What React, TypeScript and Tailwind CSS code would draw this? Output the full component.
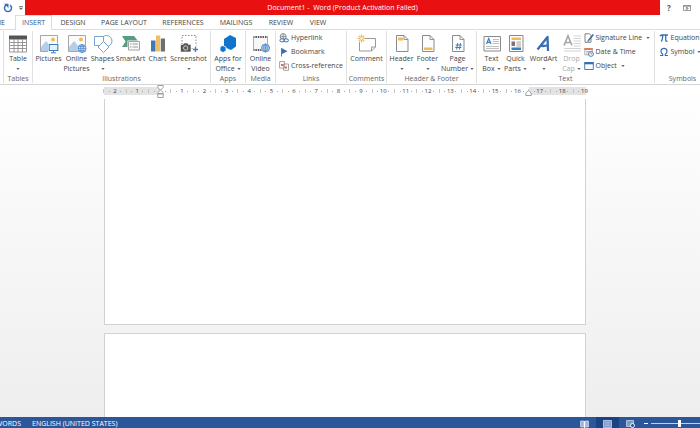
import React from 'react';
import clsx from 'clsx';

const tabs = [
  { name: 'INSERT', width: 'w-[37px]' },
  { name: 'DESIGN', width: 'w-[42px]' },
  { name: 'PAGE LAYOUT', width: 'w-[60px]' },
  { name: 'REFERENCES', width: 'w-[58px]' },
  { name: 'MAILINGS', width: 'w-[48px]' },
  { name: 'REVIEW', width: 'w-[42px]' },
  { name: 'VIEW', width: 'w-[32px]' },
];

const rulerMarks = [2, 1, 0, 1, 2, 3, 4, 5, 6, 7, 8, 9, 10, 11, 12, 13, 14, 15, 16, 17, 18, 19];

function Caret({ className }: { className?: string }) {
  return (
    <svg viewBox="0 0 4 2" className={clsx('w-1 h-0.5 shrink-0', className)} aria-hidden="true">
      <path d="M0.3 0h3.4L2 2z" fill="#666" />
    </svg>
  );
}

function Icon({ children }: { children: React.ReactNode }) {
  return (
    <svg viewBox="0 0 20 20" className="w-5 h-5 shrink-0" fill="none" aria-hidden="true">
      {children}
    </svg>
  );
}

function SmallIcon({ children }: { children: React.ReactNode }) {
  return (
    <svg viewBox="0 0 10 10" className="w-2.5 h-2.5 shrink-0" fill="none" aria-hidden="true">
      {children}
    </svg>
  );
}

function Globe({ x, y }: { x: number; y: number }) {
  return (
    <g transform={`translate(${x} ${y})`}>
      <circle r="4.6" fill="#fff" />
      <circle r="4" fill="#e4eef8" stroke="#4a86c5" strokeWidth="0.9" />
      <ellipse rx="1.8" ry="4" stroke="#4a86c5" strokeWidth="0.7" />
      <path d="M-4 0h8M-3.4-2h6.8M-3.4 2h6.8M0-4v8" stroke="#4a86c5" strokeWidth="0.7" />
    </g>
  );
}

function Landscape() {
  return (
    <>
      <path d="M1.5 1.5h17v16h-17z" fill="#fbfbfb" stroke="#a6a6a6" />
      <circle cx="14" cy="5.5" r="2" fill="#eebc5a" />
      <path d="M2 17v-4l5-6 5 6 2-2 4 4v2z" fill="#b5cde6" />
    </>
  );
}

function Sheet({ children }: { children: React.ReactNode }) {
  return (
    <Icon>
      <path d="M4.5 1.5h7.5l4 4v12H4.5z" fill="#fdfdfd" stroke="#8a8a8a" />
      <path d="M12 1.5v4h4" stroke="#8a8a8a" strokeWidth="0.9" />
      {children}
    </Icon>
  );
}

const TableIcon = () => (
  <Icon>
    <path d="M1.5 2h17v16h-17z" fill="#fff" />
    <path d="M1 1.5h18v4H1z" fill="#555" />
    <path d="M1.5 5v13h17V5M1.5 8.5h17M1.5 11.5h17M1.5 14.5h17M6 5v13M10 5v13M14.5 5v13" stroke="#8f8f8f" strokeWidth="0.9" />
  </Icon>
);

const PicturesIcon = () => (
  <Icon>
    <Landscape />
    <path d="M9 9.5h11v9H9z" fill="#fff" />
    <path d="M10.2 10.5h8.6v6h-8.6z" fill="#e9f2fb" stroke="#3c7cc0" strokeWidth="1.1" />
    <path d="M14.5 16.5v2M12 18.8h5" stroke="#3c7cc0" />
  </Icon>
);

const OnlinePicturesIcon = () => (
  <Icon>
    <Landscape />
    <Globe x={15} y={14.5} />
  </Icon>
);

const ShapesIcon = () => (
  <Icon>
    <circle cx="13.5" cy="7" r="5.5" fill="#fff" stroke="#78a4d2" />
    <path d="M1.5 2.5h9v9h-9z" fill="#fff" stroke="#78a4d2" />
    <path d="M10.5 7.5l5.5 5.5-5.5 5.5L5 13z" fill="#fff" stroke="#78a4d2" />
  </Icon>
);

const SmartArtIcon = () => (
  <Icon>
    <path d="M1 2h12l4 5-4 6H1l3.5-5.5z" fill="#5a9b83" />
    <path d="M6.5 6.5h13v10h-13z" fill="#fff" />
    <path d="M7.5 7.5h11v8.5h-11z" fill="#fafafa" stroke="#999" strokeWidth="0.9" />
    <path d="M9 10h1.5M9 13h1.5M11.5 10h5.5M11.5 13h5.5" stroke="#999" />
  </Icon>
);

const ChartIcon = () => (
  <Icon>
    <path d="M3 6.5h4.5v11H3z" fill="#3e7ab8" />
    <path d="M8 1.5h4.200v16H8z" fill="#eebf6a" />
    <path d="M12.8 4.5H17v13h-4.200z" fill="#6f6f6f" />
  </Icon>
);

const ScreenshotIcon = () => (
  <Icon>
    <path d="M3 1.5h14v13H3z" stroke="#8a8a8a" strokeDasharray="1.5 1.5" />
    <path d="M1.5 10.5H4L5 9h3.500l1 1.500H12v7.500H1.500z" fill="#555" stroke="#fff" strokeWidth="0.6" />
    <circle cx="6.7" cy="14" r="2.2" fill="#555" stroke="#ddd" strokeWidth="0.9" />
    <path d="M13.500 12.500H20V18.500h-6.500z" fill="#fff" />
    <path d="M16.5 13v5M14 15.5h5" stroke="#3c7cc0" strokeWidth="1.3" />
  </Icon>
);

const AppsIcon = () => (
  <Icon>
    <path d="M12 1l6 3v8.5L13 16l-7-3V5z" fill="#0f74cc" />
    <path d="M4.5 11.500l3.500 1.500v4l-3 1.500-3-1.500v-4z" fill="#0f74cc" stroke="#fff" strokeWidth="0.8" />
  </Icon>
);

const VideoIcon = () => (
  <Icon>
    <path d="M2 2h15v15H2z" fill="#f7f7f7" />
    <path d="M2 3h15M2 16h15" stroke="#555" strokeWidth="1.8" strokeDasharray="1.5 0.9" />
    <path d="M2.5 2v15M16.5 2v15" stroke="#a5a5a5" strokeWidth="0.9" />
    <Globe x={14.5} y={14} />
  </Icon>
);

const CommentIcon = () => (
  <Icon>
    <path d="M7 4.5h11.500v8.500l-4 4h-12V8" fill="#fff" stroke="#999" />
    <path d="M18.500 13h-4v4" stroke="#999" />
    <path d="M4.500.5v8M.5 4.500h8M1.700 1.700l5.600 5.600M7.300 1.700L1.700 7.300" stroke="#ebb655" strokeWidth="1.1" />
    <circle cx="4.5" cy="4.5" r="1.7" fill="#fff" stroke="#ebb655" strokeWidth="0.9" />
  </Icon>
);

const HeaderIcon = () => (
  <Sheet>
    <path d="M6 3.5h5v3H6z" fill="#eebc5a" />
  </Sheet>
);

const FooterIcon = () => (
  <Sheet>
    <path d="M6 13.5h8.500V16H6z" fill="#eebc5a" />
  </Sheet>
);

const PageNumberIcon = () => (
  <Sheet>
    <path d="M9.700 9l-1 6.500M12.500 9l-1 6.500M7.700 11h6M7.300 13.500h6" stroke="#3c7cc0" />
  </Sheet>
);

const TextBoxIcon = () => (
  <Icon>
    <path d="M2 2.5h16.500V17H2z" fill="#fdfdfd" stroke="#8a8a8a" />
    <path d="M4.500 10l2.200-5.500L9 10M5.200 8.300h3" stroke="#3c7cc0" strokeWidth="1.2" />
    <path d="M11 5.500h6M11 7.500h6M11 9.500h6M4 12.500h13M4 14.500h13" stroke="#b0b0b0" strokeWidth="0.8" />
  </Icon>
);

const QuickPartsIcon = () => (
  <Icon>
    <path d="M3.500 1.500H17v16H3.500z" fill="#fdfdfd" stroke="#8a8a8a" />
    <path d="M5.500 3.500H15V6H5.500z" fill="#eebc5a" />
    <path d="M5.500 7.500H9V12H5.500z" fill="#777" />
    <path d="M10.500 8H15M10.500 10H15M10.500 12H15" stroke="#999" strokeWidth="0.9" />
    <path d="M5.500 13.500H15V16H5.500z" fill="#3c7cc0" />
  </Icon>
);

const WordArtIcon = () => (
  <Icon>
    <path d="M3.500 15.500L13.500 3l.5 14M6.500 11.500c2 .8 5 .5 7.500-.5" stroke="#3670b3" strokeWidth="2.3" strokeLinejoin="round" />
  </Icon>
);

const DropCapIcon = () => (
  <Icon>
    <path d="M2 11.500L6 1.800l4 9.700M3.500 8.500h5" stroke="#a5a5a5" strokeWidth="1.6" />
    <path d="M11.500 2H19M11.500 4.500H19M11.500 7H19M11.500 9.500H19M11.500 12H19M2 14.500h17M2 17h17" stroke="#d3d3d3" />
  </Icon>
);

const HyperlinkIcon = () => (
  <SmallIcon>
    <circle cx="4.2" cy="3.6" r="3" fill="#eee" stroke="#777" strokeWidth="0.8" />
    <path d="M1.2 3.600h6M4.200.6v6" stroke="#777" strokeWidth="0.7" />
    <rect x="0.9" y="5.9" width="4.5" height="2.9" rx="1.4" fill="#fff" stroke="#3670b3" />
    <rect x="4.9" y="5.9" width="4.5" height="2.9" rx="1.4" stroke="#3670b3" />
  </SmallIcon>
);

const BookmarkIcon = () => (
  <SmallIcon>
    <path d="M2.500 1v8.500" stroke="#777" />
    <path d="M3 1.200l5.500 3L3 7z" fill="#3670b3" />
  </SmallIcon>
);

const CrossReferenceIcon = () => (
  <SmallIcon>
    <path d="M.6.6h5v6.500h-5zM4.500 3h5v6.300h-5z" fill="#fff" stroke="#999" strokeWidth="0.9" />
    <path d="M2 3h2v2H2zM6 5.500h2v2H6z" fill="#dd6b4d" />
  </SmallIcon>
);

const SignatureIcon = () => (
  <SmallIcon>
    <path d="M1 .8h4.500L7 2.300v7H1z" fill="#fff" stroke="#777" strokeWidth="0.9" />
    <path d="M9.300 1.500l-4.800 6" stroke="#3670b3" strokeWidth="1.6" />
    <path d="M3.500 9l.4-2 1.200.9z" fill="#444" />
  </SmallIcon>
);

const DateIcon = () => (
  <SmallIcon>
    <path d="M.8 1.500h7.500v6.300H.8z" fill="#fff" stroke="#999" strokeWidth="0.8" />
    <path d="M.4 1h8.300v2H.4z" fill="#dd7d5b" />
    <path d="M2 4.500h5M2 6h3" stroke="#aaa" strokeWidth="0.8" />
    <circle cx="7" cy="7" r="2.4" fill="#fff" stroke="#3670b3" strokeWidth="0.9" />
    <path d="M7 5.700V7h1" stroke="#3670b3" strokeWidth="0.7" />
  </SmallIcon>
);

const ObjectIcon = () => (
  <SmallIcon>
    <path d="M.7 1.500h8.600v7H.7z" fill="#fff" stroke="#3670b3" strokeWidth="0.9" />
    <path d="M.5 1h9v2.300h-9z" fill="#3670b3" />
  </SmallIcon>
);

const EquationIcon = () => (
  <SmallIcon>
    <path d="M1 3.200C1.500 2 2 2 3 2h6M3.700 2c0 3-.2 5-1.400 6.500M6.700 2v5c0 1.300.8 1.500 1.800 1" stroke="#3670b3" strokeWidth="1.3" />
  </SmallIcon>
);

const SymbolIcon = () => (
  <SmallIcon>
    <path d="M1 8.500h2.700V7.300C1 5.500 1.500 1.300 5 1.300s4 4.200 1.300 6v1.200H9" stroke="#3670b3" strokeWidth="1.2" />
  </SmallIcon>
);

interface GroupProps {
  name: string;
  width: string;
  children: React.ReactNode;
}

function Group({ name, width, children }: GroupProps) {
  return (
    <section aria-label={name} className={clsx('flex shrink-0 flex-col border-r border-[#e1e1e1]', width)}>
      <div className="flex h-11 justify-center">{children}</div>
      <h2 className="text-center leading-[9px] text-[#666]">{name}</h2>
    </section>
  );
}

interface BigButtonProps {
  icon: React.ReactNode;
  lines: string[];
  width: string;
  menu?: boolean;
  disabled?: boolean;
}

function BigButton({ icon, lines, width, menu, disabled }: BigButtonProps) {
  return (
    <button
      type="button"
      disabled={disabled}
      className={clsx('flex shrink-0 flex-col items-center pt-[3px] leading-[10px] whitespace-nowrap', width, disabled && 'text-[#a8a8a8]')}
    >
      {icon}
      <span>{lines[0]}</span>
      <span className="flex h-2.5 items-center gap-0.5">
        {lines[1]}
        {menu && <Caret />}
      </span>
    </button>
  );
}

function SmallButton({ icon, label, menu }: { icon: React.ReactNode; label: string; menu?: boolean }) {
  return (
    <button type="button" className="flex h-3.5 items-center gap-0.5 whitespace-nowrap">
      {icon}
      <span>{label}</span>
      {menu && <Caret className="ml-0.5" />}
    </button>
  );
}

function TitleBar() {
  return (
    <header className="flex h-[15px] shrink-0 bg-white">
      <div className="flex w-[25px] items-center justify-between pr-0.5 pl-[3px]">
        <button type="button" aria-label="Repeat">
          <svg viewBox="0 0 10 10" className="w-2.5 h-2.5" fill="none">
            <path d="M3 2.200a3.500 3.500 0 1 0 4 0" stroke="#3670b3" strokeWidth="1.5" />
            <path d="M1 .7h4.500V5z" fill="#3670b3" />
          </svg>
        </button>
        <button type="button" aria-label="Customize Quick Access Toolbar">
          <svg viewBox="0 0 4 4" className="w-1 h-1">
            <path d="M0 0h4v.7H0zM0 1.700h4L2 4z" fill="#666" />
          </svg>
        </button>
      </div>
      <h1 className="flex-1 bg-[#e81010] text-center leading-[15px] whitespace-pre text-white">
        {'Document1 -  Word (Product Activation Failed)'}
      </h1>
      <div className="flex w-10 items-center gap-3 pl-[7px] text-[#555]">
        <button type="button" className="text-[8px] font-bold">?</button>
        <button type="button" aria-label="Ribbon Display Options">
          <svg viewBox="0 0 8 6" className="w-2 h-1.5" fill="none">
            <path d="M.4.4h7.200v5.200H.4zM0 1.200h8" stroke="#777" strokeWidth="0.8" />
            <path d="M4 5V2.500M2.700 3.700L4 2.400l1.300 1.300" stroke="#555" strokeWidth="0.8" />
          </svg>
        </button>
      </div>
    </header>
  );
}

function TabStrip() {
  return (
    <nav className="flex h-[15px] shrink-0 border-b border-[#dcdcdc] bg-white leading-[15px]">
      <button type="button" className="flex w-[15px] justify-end pr-[10px]">
        <span>HOME</span>
      </button>
      {tabs.map((tab, i) => (
        <button
          key={tab.name}
          type="button"
          className={clsx(
            'shrink-0 whitespace-nowrap',
            tab.width,
            i === 0 && '-mb-px border-x border-t border-[#dcdcdc] bg-white leading-[14px] text-[#2b579a]'
          )}
        >
          {tab.name}
        </button>
      ))}
    </nav>
  );
}

function Ribbon() {
  return (
    <div className="flex h-[55px] shrink-0 overflow-hidden border-b border-[#d5d5d5] bg-white py-px pl-[3px]">
      <Group name="Tables" width="w-[30px] border-l">
        <BigButton icon={<TableIcon />} lines={['Table']} width="w-7" menu />
      </Group>
      <Group name="Illustrations" width="w-[178px]">
        <BigButton icon={<PicturesIcon />} lines={['Pictures']} width="w-7" />
        <BigButton icon={<OnlinePicturesIcon />} lines={['Online', 'Pictures']} width="w-7" />
        <BigButton icon={<ShapesIcon />} lines={['Shapes']} width="w-6" menu />
        <BigButton icon={<SmartArtIcon />} lines={['SmartArt']} width="w-8" />
        <BigButton icon={<ChartIcon />} lines={['Chart']} width="w-[22px]" />
        <BigButton icon={<ScreenshotIcon />} lines={['Screenshot']} width="w-10" menu />
      </Group>
      <Group name="Apps" width="w-[35px]">
        <BigButton icon={<AppsIcon />} lines={['Apps for', 'Office']} width="w-8" menu />
      </Group>
      <Group name="Media" width="w-[30px]">
        <BigButton icon={<VideoIcon />} lines={['Online', 'Video']} width="w-7" />
      </Group>
      <Group name="Links" width="w-[71px]">
        <div className="flex flex-col">
          <SmallButton icon={<HyperlinkIcon />} label="Hyperlink" />
          <SmallButton icon={<BookmarkIcon />} label="Bookmark" />
          <SmallButton icon={<CrossReferenceIcon />} label="Cross-reference" />
        </div>
      </Group>
      <Group name="Comments" width="w-10">
        <BigButton icon={<CommentIcon />} lines={['Comment']} width="w-9" />
      </Group>
      <Group name="Header & Footer" width="w-[90px]">
        <BigButton icon={<HeaderIcon />} lines={['Header']} width="w-7" menu />
        <BigButton icon={<FooterIcon />} lines={['Footer']} width="w-6" menu />
        <BigButton icon={<PageNumberIcon />} lines={['Page', 'Number']} width="w-9" menu />
      </Group>
      <Group name="Text" width="w-[178px]">
        <BigButton icon={<TextBoxIcon />} lines={['Text', 'Box']} width="w-6" menu />
        <BigButton icon={<QuickPartsIcon />} lines={['Quick', 'Parts']} width="w-6" menu />
        <BigButton icon={<WordArtIcon />} lines={['WordArt']} width="w-8" menu />
        <BigButton icon={<DropCapIcon />} lines={['Drop', 'Cap']} width="w-6" menu disabled />
        <div className="flex w-[68px] flex-col">
          <SmallButton icon={<SignatureIcon />} label="Signature Line" menu />
          <SmallButton icon={<DateIcon />} label="Date & Time" />
          <SmallButton icon={<ObjectIcon />} label="Object" menu />
        </div>
      </Group>
      <Group name="Symbols" width="w-14">
        <div className="flex w-12 flex-col">
          <SmallButton icon={<EquationIcon />} label="Equation" />
          <button type="button" className="flex h-3.5 items-center gap-0.5">
            <SymbolIcon />
            <span>Symbol</span>
            <Caret />
          </button>
        </div>
      </Group>
    </div>
  );
}

function Ruler() {
  return (
    <div className="relative mx-auto flex h-2 w-[482px] shrink-0 bg-[#e3e3e3] text-[6px] leading-[8px] text-[#444]">
      <div className="ml-14 w-[369px] bg-white" />
      <div className="absolute inset-y-0 -left-[3px] flex w-[492px]">
        {rulerMarks.map((mark, i) => (
          <div key={i} className="grid flex-1 grid-cols-4 items-center">
            <span className="mx-auto h-1 w-px bg-[#c4c4c4]" />
            <span className="mx-auto h-px w-px bg-[#aaa]" />
            <span className="flex h-2 justify-center">{mark || ''}</span>
            {i < rulerMarks.length - 1 && <span className="mx-auto h-px w-px bg-[#aaa]" />}
          </div>
        ))}
      </div>
      <svg viewBox="0 0 7 13" className="absolute -top-0.5 left-[53px] h-[13px] w-[7px]" fill="#fff" stroke="#8a8a8a" strokeWidth="0.8" aria-hidden="true">
        <path d="M.8.5h5.400v2L3.500 5.200.8 2.500z" />
        <path d="M.8 8.500v-1L3.500 5l2.700 2.500v1zM.8 9h5.400v3.500H.8z" />
      </svg>
      <svg viewBox="0 0 7 6" className="absolute top-[3px] left-[421px] h-1.5 w-[7px]" fill="#fff" stroke="#8a8a8a" strokeWidth="0.8" aria-hidden="true">
        <path d="M.8 5.500V3L3.500.6 6.200 3v2.500z" />
      </svg>
    </div>
  );
}

function StatusBar() {
  return (
    <footer className="flex h-[11px] shrink-0 items-stretch overflow-hidden bg-[#2b579a] leading-[13px] whitespace-nowrap text-white">
      <span className="flex w-[21px] shrink-0 justify-end">WORDS</span>
      <span className="ml-[11px]">ENGLISH (UNITED STATES)</span>
      <div className="ml-auto flex">
        <button type="button" aria-label="Read Mode" className="flex w-[23px] items-center justify-center pt-0.5">
          <svg viewBox="0 0 9 8" className="h-2 w-[9px]" fill="none">
            <path d="M.5 1H4v6H.5zM5 1h3.500v6H5z" fill="#9fb6d8" stroke="#c9d6ea" strokeWidth="0.8" />
            <path d="M4.500 1v7" stroke="#fff" />
          </svg>
        </button>
        <button type="button" aria-label="Print Layout" className="flex w-[23px] items-center justify-center bg-[#1a4384] pt-0.5">
          <svg viewBox="0 0 9 8" className="h-2 w-[9px]" fill="none">
            <path d="M.5.5h8v7h-8z" fill="#7d9cc9" stroke="#b9cae3" strokeWidth="0.9" />
            <path d="M2 2.500h5M2 4h5M2 5.500h5" stroke="#a9bedd" strokeWidth="0.7" />
          </svg>
        </button>
        <button type="button" aria-label="Web Layout" className="flex w-[22px] items-center justify-center pt-0.5">
          <svg viewBox="0 0 9 8" className="h-2 w-[9px]" fill="none">
            <path d="M.5.5h7v6h-7z" fill="#7d9cc9" stroke="#b9cae3" strokeWidth="0.9" />
            <circle cx="6.5" cy="5.500" r="2" fill="#2b579a" stroke="#fff" strokeWidth="0.9" />
          </svg>
        </button>
        <button type="button" aria-label="Zoom Out" className="flex w-2.5 items-center justify-center pt-0.5">
          <span className="h-px w-1 bg-white" />
        </button>
        <input
          type="range"
          aria-label="Zoom"
          defaultValue={59}
          className="mt-[3px] h-[7px] w-[49px] appearance-none bg-[linear-gradient(#c3d0e6,#c3d0e6)] bg-[length:100%_1px] bg-center bg-no-repeat [&::-webkit-slider-thumb]:h-[7px] [&::-webkit-slider-thumb]:w-[3px] [&::-webkit-slider-thumb]:appearance-none [&::-webkit-slider-thumb]:bg-white"
        />
      </div>
    </footer>
  );
}

export default function App() {
  return (
    <div className="flex h-screen flex-col overflow-hidden bg-white font-['Open_Sans',sans-serif] text-[7px] text-[#444]">
      <TitleBar />
      <TabStrip />
      <Ribbon />
      <main className="flex min-h-0 flex-1 flex-col overflow-hidden bg-linear-to-b from-white to-[#eeeeee] pt-0.5 pr-2.5">
        <Ruler />
        <div className="mx-auto mt-1 flex w-[482px] flex-col gap-2">
          <article aria-label="Page 1" className="h-[226px] shrink-0 border border-t-0 border-[#d2d2d2] bg-white" />
          <article aria-label="Page 2" className="h-[226px] shrink-0 border border-[#d2d2d2] bg-white" />
        </div>
      </main>
      <StatusBar />
    </div>
  );
}
